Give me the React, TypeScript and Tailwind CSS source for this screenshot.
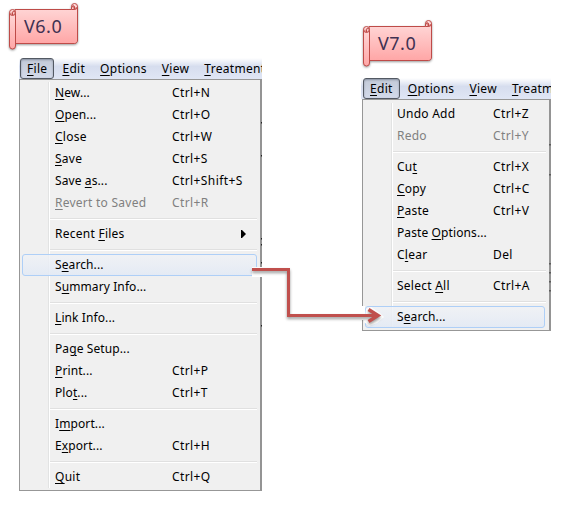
import { Fragment } from 'react'
import clsx from 'clsx'

type Item = {
  label: string
  shortcut?: string
  disabled?: boolean
  active?: boolean
  submenu?: boolean
}

// "_" goes before the access key letter
const fileGroups: Item[][] = [
  [
    { label: '_New...', shortcut: 'Ctrl+N' },
    { label: '_Open...', shortcut: 'Ctrl+O' },
    { label: '_Close', shortcut: 'Ctrl+W' },
    { label: '_Save', shortcut: 'Ctrl+S' },
    { label: 'Save _as...', shortcut: 'Ctrl+Shift+S' },
    { label: '_Revert to Saved', shortcut: 'Ctrl+R', disabled: true },
  ],
  [{ label: 'Recent _Files', submenu: true }],
  [{ label: 'S_earch...', active: true }, { label: 'S_ummary Info...' }],
  [{ label: '_Link Info...' }],
  [
    { label: 'Pa_ge Setup...' },
    { label: '_Print...', shortcut: 'Ctrl+P' },
    { label: 'Plo_t...', shortcut: 'Ctrl+T' },
  ],
  [{ label: 'I_mport...' }, { label: 'E_xport...', shortcut: 'Ctrl+H' }],
  [{ label: '_Quit', shortcut: 'Ctrl+Q' }],
]

const editGroups: Item[][] = [
  [
    { label: 'Undo Add', shortcut: 'Ctrl+Z' },
    { label: 'Redo', shortcut: 'Ctrl+Y', disabled: true },
  ],
  [
    { label: 'Cu_t', shortcut: 'Ctrl+X' },
    { label: '_Copy', shortcut: 'Ctrl+C' },
    { label: '_Paste', shortcut: 'Ctrl+V' },
    { label: 'Paste _Options...' },
    { label: 'C_lear', shortcut: 'Del' },
  ],
  [{ label: 'Select _All', shortcut: 'Ctrl+A' }],
  [{ label: 'S_earch...', active: true }],
]

function Label({ text }: { text: string }) {
  const i = text.indexOf('_')
  if (i < 0) return <>{text}</>
  return (
    <>
      {text.slice(0, i)}
      <span className="underline decoration-1 underline-offset-2">{text[i + 1]}</span>
      {text.slice(i + 2)}
    </>
  )
}

function ScrollBadge({ text, id }: { text: string; id: string }) {
  return (
    <div className="relative h-[48px] w-[72px] shrink-0">
      <svg className="absolute inset-0 overflow-visible" width="72" height="48" viewBox="0 0 72 48">
        <defs>
          <linearGradient id={id} x1="0" y1="0" x2="0" y2="1">
            <stop offset="0" stopColor="#ffdcdc" />
            <stop offset="1" stopColor="#ffa6a6" />
          </linearGradient>
        </defs>
        <g
          stroke="#be4b48"
          strokeWidth="1"
          fill={`url(#${id})`}
          style={{ filter: 'drop-shadow(0 1.5px 1px rgba(0,0,0,.4))' }}
        >
          <path d="M6 6.500H62.500V3.500a3 3 0 0 1 6 0V37a3 3 0 0 1-3 3.500H6Z" />
          <path d="M.5 9.500a3 3 0 0 1 6 0V43a3 3 0 0 1-6 0Z" />
        </g>
        <g stroke="#be4b48" fill="none">
          <path d="M62.500 6.500h3a3 3 0 0 0 3-3M65.500 6.500V4a1.200 1.200 0 0 0-2.500 0" fill="#d98583" />
          <path d="M.5 9.500a3 3 0 0 0 3 3 3 3 0 0 0 3-3M3.500 12V9.500a1.200 1.200 0 0 1 2.500 0" fill="#e59b99" />
        </g>
      </svg>
      <span className="absolute top-[11px] left-[15px] text-[18px] leading-[24px] tracking-[0.5px] text-[#403152]">
        {text}
      </span>
    </div>
  )
}

function MenuBar({ items, className }: { items: string[]; className?: string }) {
  return (
    <div
      className={clsx(
        'flex h-[21px] overflow-hidden bg-linear-to-b from-white via-[#d6ddee] via-40% to-[#e0e6f5] tracking-[0.3px] whitespace-nowrap',
        className,
      )}
    >
      {items.map((item, i) => (
        <div
          key={item}
          className={clsx(
            'h-[21px] shrink-0 leading-[19px]',
            i === 0
              ? 'rounded-[3px] border border-[#535963] bg-linear-to-b from-[#c3cad8] to-[#d3daea] px-[6px] shadow-[inset_0_1px_2px_rgba(60,70,90,.45)]'
              : 'pt-px pr-[7px] pl-[8px]',
          )}
        >
          <Label text={item} />
        </div>
      ))}
    </div>
  )
}

type MenuProps = {
  groups: Item[][]
  className?: string
  itemClass: string
  shortcutClass: string
}

function Menu({ groups, className, itemClass, shortcutClass }: MenuProps) {
  return (
    <div
      className={clsx(
        'border border-r-2 border-[#979797] border-r-[#949494] bg-[#f0f0f0] px-[2px] pb-[2px]',
        className,
      )}
    >
      <div className="bg-[linear-gradient(to_right,transparent_26px,#e2e3e3_26px,#e2e3e3_27px,#fff_27px,#fff_28px,transparent_28px)]">
        {groups.map((group, i) => (
          <Fragment key={i}>
            {i > 0 && (
              <div className="flex h-[9px] items-center pr-px pl-[28px]">
                <div className="h-[2px] w-full border-t border-b border-t-[#e0e0e0] border-b-white" />
              </div>
            )}
            {group.map((item) => (
              <div
                key={item.label}
                className={clsx(
                  'flex h-[22px] items-center rounded-[3px] border whitespace-nowrap',
                  itemClass,
                  item.active
                    ? 'border-[#aecff7] bg-linear-to-b from-[#f0f2f6]/80 to-[#e3eaf5]/90'
                    : 'border-transparent',
                  item.disabled && 'text-[#808080]',
                )}
              >
                <span className={clsx('flex-1', item.label.endsWith('...') ? 'tracking-[0.1px]' : 'tracking-[0.25px]')}>
                  <Label text={item.label} />
                </span>
                {item.shortcut && (
                  <span className={clsx('tracking-[0.4px]', shortcutClass)}>{item.shortcut}</span>
                )}
                {item.submenu && (
                  <svg className="mr-[10px]" width="5" height="8" viewBox="0 0 5 8">
                    <path d="M0 0h1l4 4-4 4H0Z" />
                  </svg>
                )}
              </div>
            ))}
          </Fragment>
        ))}
      </div>
    </div>
  )
}

function Connector() {
  return (
    <svg className="pointer-events-none absolute inset-0" width="563" height="509">
      <path
        d="M261.500 122v1.500M261.500 155v1.500M261.500 238v1.500M261.500 244v1.500M261.500 262v1.500M261.500 325v1.500M550 144v1.500M550 174v1.500M550 263v1.500M550 272v1.500M550 281v1.500M550 290v1.500"
        stroke="#222"
      />
      <rect x="252" y="267" width="12" height="10" fill="#fff" />
      <rect x="360" y="306" width="5" height="14" fill="#fff" />
      <path d="M366 309l5-2 9 6 4 4-7 6-8 3-5-4Z" fill="#fff" />
      <g
        fill="none"
        stroke="#c0504d"
        strokeWidth="3"
        style={{ filter: 'drop-shadow(0 2px 1.5px rgba(0,0,0,.4))' }}
      >
        <path d="M252 269.500H288.500V315.500H377" />
        <path d="M368.500 309.500l9.500 6-9.500 6" strokeWidth="3.500" />
      </g>
    </svg>
  )
}

export default function App() {
  return (
    <div className="relative flex h-[509px] w-[563px] overflow-hidden bg-white font-['Noto_Sans',sans-serif] text-[12px] text-black">
      <div className="w-[361px] pt-[3px]">
        <div className="pl-[9px]">
          <ScrollBadge text="V6.0" id="scroll-v6" />
        </div>
        <div className="mt-[7px] ml-[19px] w-[243px]">
          <MenuBar className="pl-px" items={['_File', '_Edit', '_Options', '_View', '_Treatment']} />
          <Menu
            groups={fileGroups}
            className="pt-[2px]"
            itemClass="mr-px pl-[32px]"
            shortcutClass="w-[84px]"
          />
        </div>
      </div>
      <div className="pt-[20px]">
        <div className="pl-[2px]">
          <ScrollBadge text="V7.0" id="scroll-v7" />
        </div>
        <div className="mt-[10px] w-[190px]">
          <MenuBar className="pl-[2px]" items={['_Edit', '_Options', '_View', '_Treatm']} />
          <Menu
            groups={editGroups}
            className="ml-px pt-[3px]"
            itemClass="mr-[2px] pl-[31px]"
            shortcutClass="w-[51px]"
          />
        </div>
      </div>
      <Connector />
    </div>
  )
}
